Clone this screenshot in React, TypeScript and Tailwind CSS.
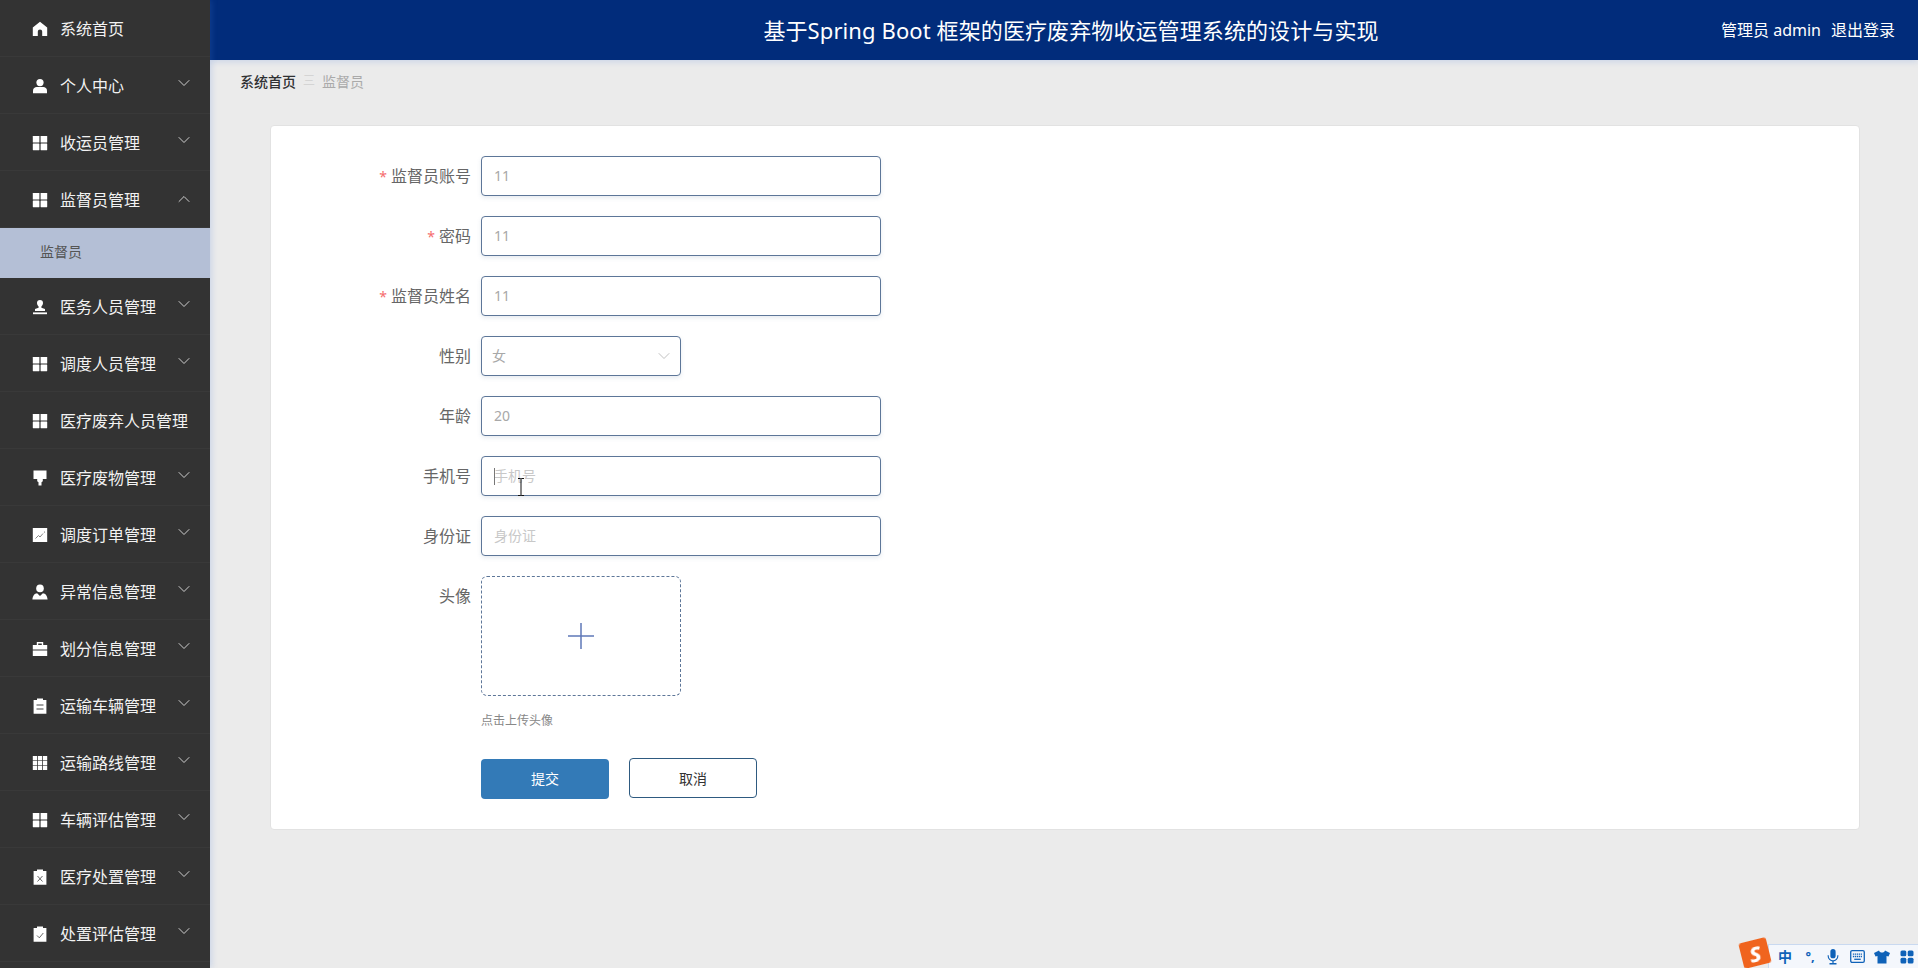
import type { ReactNode } from "react"
import { ChevronDown, ChevronUp } from "lucide-react"

const font = "font-['Noto_Sans','Noto_Sans_CJK_SC',sans-serif]"

function HomeIcon() {
  return (
    <svg viewBox="0 0 16 16" className="h-4 w-4" fill="#fff">
      <path d="M8 .8.8 6.600V15h5v-4.400a2.200 2.200 0 0 1 4.400 0V15h5V6.600z" />
    </svg>
  )
}

function UserIcon() {
  return (
    <svg viewBox="0 0 16 16" className="h-4 w-4" fill="#fff">
      <circle cx="8" cy="4.600" r="3.600" />
      <path d="M1 15.200v-2.800c0-2 2-3.400 3.600-3.400h6.800c1.600 0 3.600 1.400 3.600 3.400v2.800z" />
    </svg>
  )
}

function GridIcon() {
  return (
    <svg viewBox="0 0 16 16" className="h-4 w-4" fill="#fff">
      <rect x="0.800" y="1" width="6.600" height="6.600" rx="0.400" />
      <rect x="8.600" y="1" width="6.600" height="6.600" rx="0.400" />
      <rect x="0.800" y="8.600" width="6.600" height="6.600" rx="0.400" />
      <rect x="8.600" y="8.600" width="6.600" height="6.600" rx="0.400" />
    </svg>
  )
}

function CustomIcon() {
  return (
    <svg viewBox="0 0 16 16" className="h-4 w-4" fill="#fff">
      <path d="M8 1a3 3 0 0 1 3 3c0 1.500-.8 2.700-1.600 3.600v1.200l3.600 1.200v2H3v-2l3.600-1.200V7.600C5.800 6.700 5 5.500 5 4a3 3 0 0 1 3-3z" />
      <rect x="1" y="13.400" width="14" height="1.800" />
    </svg>
  )
}

function BrushIcon() {
  return (
    <svg viewBox="0 0 16 16" className="h-4 w-4" fill="#fff">
      <path d="M1.500 .5h13v8.500h-3.700v2.200l-1.300 1V15.500h-3V12.200l-1.300-1V9H1.500z" />
    </svg>
  )
}

function ChartIcon() {
  return (
    <svg viewBox="0 0 16 16" className="h-4 w-4">
      <rect x="0.800" y="1" width="14.400" height="14" fill="#fff" />
      <path d="M3.500 11.500 6.500 8.500 8 10l3-3.500" stroke="#666" strokeWidth="0.800" fill="none" />
      <circle cx="12.500" cy="5" r="0.600" fill="#666" />
    </svg>
  )
}

function PersonIcon() {
  return (
    <svg viewBox="0 0 16 16" className="h-4 w-4" fill="#fff">
      <circle cx="8" cy="4.400" r="3.800" />
      <path d="M.4 15.600c.3-3.800 2.200-6.200 4.700-6.400L8 12l2.900-2.800c2.500.2 4.400 2.600 4.700 6.400z" />
    </svg>
  )
}

function CaseIcon() {
  return (
    <svg viewBox="0 0 16 16" className="h-4 w-4" fill="#fff">
      <path d="M4.800 1h6.400v3h4v4.600H.8V4h4zM6.200 2.400V4h3.600V2.400zM.8 9.500h14.400V15H.8z" fillRule="evenodd" />
    </svg>
  )
}

function ClipboardIcon({ mark }: { mark: "lines" | "x" | "check" }) {
  return (
    <svg viewBox="0 0 16 16" className="h-4 w-4">
      <path d="M5 .5h6V2h3.400v13.800H1.600V2H5z" fill="#fff" />
      {mark === "lines" && <path d="M4.500 7h7M4.500 11h7" stroke="#444" strokeWidth="1" />}
      {mark === "x" && <path d="M5.500 7 10.500 12.500M10.500 7 5.500 12.500" stroke="#555" strokeWidth="0.900" />}
      {mark === "check" && <path d="M5 9.500 7.300 11.800 11.300 7" stroke="#555" strokeWidth="0.900" fill="none" />}
    </svg>
  )
}

function TableIcon() {
  return (
    <svg viewBox="0 0 16 16" className="h-4 w-4" fill="#fff">
      <rect x="0.800" y="1" width="4.300" height="4.300" />
      <rect x="5.850" y="1" width="4.300" height="4.300" />
      <rect x="10.900" y="1" width="4.300" height="4.300" />
      <rect x="0.800" y="5.850" width="4.300" height="4.300" />
      <rect x="5.850" y="5.850" width="4.300" height="4.300" />
      <rect x="10.900" y="5.850" width="4.300" height="4.300" />
      <rect x="0.800" y="10.700" width="4.300" height="4.300" />
      <rect x="5.850" y="10.700" width="4.300" height="4.300" />
      <rect x="10.900" y="10.700" width="4.300" height="4.300" />
    </svg>
  )
}

const topItems = [
  { label: "系统首页", icon: <HomeIcon />, arrow: null },
  { label: "个人中心", icon: <UserIcon />, arrow: "down" },
  { label: "收运员管理", icon: <GridIcon />, arrow: "down" },
  { label: "监督员管理", icon: <GridIcon />, arrow: "up" },
]

const bottomItems = [
  { label: "医务人员管理", icon: <CustomIcon />, arrow: "down" },
  { label: "调度人员管理", icon: <GridIcon />, arrow: "down" },
  { label: "医疗废弃人员管理", icon: <GridIcon />, arrow: null },
  { label: "医疗废物管理", icon: <BrushIcon />, arrow: "down" },
  { label: "调度订单管理", icon: <ChartIcon />, arrow: "down" },
  { label: "异常信息管理", icon: <PersonIcon />, arrow: "down" },
  { label: "划分信息管理", icon: <CaseIcon />, arrow: "down" },
  { label: "运输车辆管理", icon: <ClipboardIcon mark="lines" />, arrow: "down" },
  { label: "运输路线管理", icon: <TableIcon />, arrow: "down" },
  { label: "车辆评估管理", icon: <GridIcon />, arrow: "down" },
  { label: "医疗处置管理", icon: <ClipboardIcon mark="x" />, arrow: "down" },
  { label: "处置评估管理", icon: <ClipboardIcon mark="check" />, arrow: "down" },
]

function MenuRow({ label, icon, arrow }: { label: string; icon: ReactNode; arrow: string | null }) {
  return (
    <div className="relative flex h-[57px] items-center border-b border-[#393939] pt-px pl-[32px] text-[16px] text-[#f2f2f2]">
      <span className="mr-[12px] flex w-[16px] justify-center">{icon}</span>
      <span className="whitespace-nowrap">{label}</span>
      {arrow === "down" && <ChevronDown className="absolute top-[16px] right-[16px] h-[20px] w-[20px] text-[#cfcfcf]" strokeWidth={1.200} />}
      {arrow === "up" && <ChevronUp className="absolute top-[18px] right-[16px] h-[20px] w-[20px] text-[#cfcfcf]" strokeWidth={1.200} />}
    </div>
  )
}

function Sidebar() {
  return (
    <aside className="relative z-10 h-full w-[210px] shrink-0 overflow-hidden bg-[#333333] shadow-[2px_0_6px_rgba(80,130,220,0.2)]">
      {topItems.map((item) => (
        <MenuRow key={item.label} {...item} />
      ))}
      <div className="flex h-[50px] items-center bg-[#b4bfd6] pb-[3px] pl-[40px] text-[14px] text-[#555]">监督员</div>
      {bottomItems.map((item) => (
        <MenuRow key={item.label} {...item} />
      ))}
    </aside>
  )
}

function Field({ label, required, children }: { label: string; required?: boolean; children: ReactNode }) {
  return (
    <div className="mb-[20px] flex">
      <label className="flex h-[40px] w-[210px] shrink-0 items-center justify-end pr-[10px] text-[16px] text-[#666]">
        {required && <span className="mr-[4px] text-[14px] text-[#f56c6c]">*</span>}
        {label}
      </label>
      {children}
    </div>
  )
}

function TextBox({ value, placeholder, caret }: { value?: string; placeholder?: string; caret?: boolean }) {
  return (
    <div className="relative flex h-[40px] w-[400px] items-center rounded-[4px] border border-[#5d7698] bg-white pb-px pl-[12px] text-[14px] shadow-[0_2px_4px_rgba(93,118,152,0.15)]">
      {value ? <span className="text-[#a8a8a8]">{value}</span> : <span className="text-[#c8c8c8]">{placeholder}</span>}
      {caret && <span className="absolute top-[11px] left-[12px] h-[17px] w-px bg-[#777]" />}
      {caret && (
        <svg viewBox="0 0 8 18" className="absolute top-[21px] left-[35px] h-[18px] w-[8px]" fill="none" stroke="#111" strokeWidth="1">
          <path d="M1 .5h2.500L4 1l.5-.5H7M4 1v16M1 17.500h2.500L4 17l.5.5H7" />
        </svg>
      )}
    </div>
  )
}

function ImeBar() {
  return (
    <div className="fixed right-0 bottom-0 flex h-[29px] items-end">
      <div className="relative z-20 mb-[2px] flex h-[26px] w-[28px] -rotate-[14deg] items-center justify-center rounded-[3px] bg-[#f0641e] text-[22px] leading-none font-extrabold text-white italic">
        S
      </div>
      <div className="-ml-[1px] flex h-[24px] w-[150px] items-center gap-[9.5px] border-t border-l border-[#c9d9f0] bg-[#f4f7fc] pl-[9px] text-[#0f62b8]">
        <span className="text-[14px] leading-none font-bold">中</span>
        <span className="w-[15px] pl-[4px] text-[13px] leading-none font-bold">°,</span>
        <svg viewBox="0 0 16 18" className="h-[17px] w-[14px]" fill="#0f62b8">
          <rect x="5" y="0.500" width="6" height="10.500" rx="3" />
          <path d="M2.500 7.500v1a5.500 5.500 0 0 0 11 0v-1" fill="none" stroke="#0f62b8" strokeWidth="1.300" />
          <path d="M7.300 14h1.400v2.500H12V18H4v-1.500h3.300z" />
        </svg>
        <svg viewBox="0 0 16 14" className="h-[13px] w-[15px]">
          <rect x="0.700" y="0.700" width="14.600" height="12.600" rx="1.500" fill="none" stroke="#0f62b8" strokeWidth="1.400" />
          <path d="M3 4.500h10M3 7h10" stroke="#0f62b8" strokeWidth="1.400" strokeDasharray="1.400 0.700" />
          <path d="M4.500 10h7" stroke="#0f62b8" strokeWidth="1.400" />
        </svg>
        <svg viewBox="0 0 16 14" className="h-[14px] w-[16px]" fill="#0f62b8">
          <path d="M5 .5 0 3l1.500 3.500L3.500 6v7.500h9V6l2 .5L16 3 11 .5C10.500 2 9.500 2.500 8 2.500S5.500 2 5 .5z" />
        </svg>
        <svg viewBox="0 0 14 14" className="h-[14px] w-[14px]" fill="#0f62b8">
          <rect x="0.500" y="0.500" width="5.800" height="5.800" rx="1.500" />
          <rect x="7.700" y="0.500" width="5.800" height="5.800" rx="1.500" />
          <rect x="0.500" y="7.700" width="5.800" height="5.800" rx="1.500" />
          <rect x="7.700" y="7.700" width="5.800" height="5.800" rx="1.500" />
        </svg>
      </div>
    </div>
  )
}

export default function App() {
  return (
    <div className={`flex h-[968px] w-full overflow-hidden bg-[#ebebeb] ${font}`}>
      <Sidebar />
      <div className="min-w-0 flex-1">
        <header className="relative flex h-[60px] items-center justify-center bg-[#012c7b] pl-[14px] text-white shadow-[0_2px_6px_rgba(80,130,220,0.2)]">
          <h1 className="text-[22px] font-normal tracking-[0.1px]">基于Spring Boot 框架的医疗废弃物收运管理系统的设计与实现</h1>
          <div className="absolute top-0 right-[23px] flex h-[60px] items-center gap-[10px] text-[16px]">
            <span>管理员 admin</span>
            <span>退出登录</span>
          </div>
        </header>
        <div className="flex h-[44px] items-center pb-[2px] pl-[30px] text-[14px]">
          <span className="font-medium text-[#303133]">系统首页</span>
          <span className="mx-[7px] text-[12px] text-[#d4d4d4]">三</span>
          <span className="text-[#aaa]">监督员</span>
        </div>
        <main className="mt-[21px] mr-[58px] ml-[60px] h-[705px] rounded-[4px] border border-[#e2e2e2] bg-white pt-[30px]">
          <Field label="监督员账号" required>
            <TextBox value="11" />
          </Field>
          <Field label="密码" required>
            <TextBox value="11" />
          </Field>
          <Field label="监督员姓名" required>
            <TextBox value="11" />
          </Field>
          <Field label="性别">
            <div className="flex h-[40px] w-[200px] items-center justify-between rounded-[4px] border border-[#5d7698] bg-white pr-[6px] pb-px pl-[10px] text-[14px] text-[#a8a8a8] shadow-[0_2px_4px_rgba(93,118,152,0.15)]">
              女
              <ChevronDown className="h-[20px] w-[20px] text-[#bbb]" strokeWidth={1.100} />
            </div>
          </Field>
          <Field label="年龄">
            <TextBox value="20" />
          </Field>
          <Field label="手机号">
            <TextBox placeholder="手机号" caret />
          </Field>
          <Field label="身份证">
            <TextBox placeholder="身份证" />
          </Field>
          <div className="flex">
            <label className="flex h-[40px] w-[210px] shrink-0 items-center justify-end pr-[10px] text-[16px] text-[#666]">头像</label>
            <div>
              <div className="flex h-[120px] w-[200px] items-center justify-center rounded-[6px] border border-dashed border-[#5d7698] bg-white">
                <svg viewBox="0 0 28 28" className="h-[28px] w-[28px]" stroke="#5f78b8" strokeWidth="1.500">
                  <path d="M14 1v26M1 14h26" />
                </svg>
              </div>
              <p className="mt-[16px] text-[12px] leading-[18px] text-[#888]">点击上传头像</p>
            </div>
          </div>
          <div className="mt-[29px] ml-[210px] flex items-start gap-[20px] text-[14px]">
            <button className="h-[40px] w-[128px] rounded-[4px] bg-[#337ab7] pb-px text-white">提交</button>
            <button className="-mt-px h-[40px] w-[128px] rounded-[4px] border border-[#2e5a80] bg-white text-[#333]">取消</button>
          </div>
        </main>
      </div>
      <ImeBar />
    </div>
  )
}
